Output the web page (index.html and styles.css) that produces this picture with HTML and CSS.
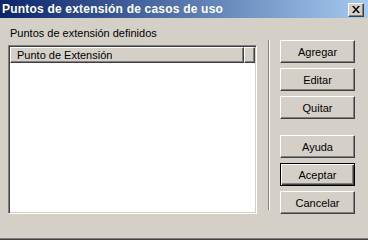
FILE: index.html
```html
<!DOCTYPE html>
<html lang="es">
<head>
    <meta charset="UTF-8">
    <title>Puntos de extensión de casos de uso</title>
    <link rel="stylesheet" href="styles.css">
</head>
<body>
    <div class="window">
        <div class="titlebar">
            <span class="title">Puntos de extensión de casos de uso</span>
            <button class="close-btn" type="button">
                <svg width="8" height="7" viewBox="0 0 8 7">
                    <path d="M0 0h2l2 2.5 2-2.5h2l-3 3.5 3 3.5h-2l-2-2.5-2 2.5h-2l3-3.5z" fill="#000"/>
                </svg>
            </button>
        </div>

        <div class="content">
            <div class="left-col">
                <div class="group-label">Puntos de extensión definidos</div>
                <div class="listview">
                    <div class="lv-header">
                        <div class="lv-col main">Punto de Extensión</div>
                        <div class="lv-col rest"></div>
                    </div>
                    <div class="lv-body"></div>
                </div>
            </div>

            <div class="separator"></div>

            <div class="buttons">
                <button type="button" class="btn">Agregar</button>
                <button type="button" class="btn">Editar</button>
                <button type="button" class="btn">Quitar</button>
                <button type="button" class="btn spaced">Ayuda</button>
                <button type="button" class="btn default">Aceptar</button>
                <button type="button" class="btn">Cancelar</button>
            </div>
        </div>
    </div>
</body>
</html>
```

FILE: styles.css
```css
body {
    margin: 0;
    font-family: "Liberation Sans", Arial, sans-serif;
    font-size: 11px;
    background: #d4d0c8;
}

.window {
    width: 368px;
    height: 240px;
    box-sizing: border-box;
    border-bottom: 1px solid #404040;
    box-shadow: inset 0 -1px #808080;
    overflow: hidden;
}

.titlebar {
    height: 18px;
    display: flex;
    align-items: center;
    justify-content: space-between;
    padding: 0 4px 0 2px;
    background: linear-gradient(to right, #0a246a, #a6caf0);
}

.title {
    color: #fff;
    font-weight: bold;
    font-size: 12px;
    letter-spacing: 0.2px;
}

.close-btn {
    width: 16px;
    height: 14px;
    padding: 0;
    margin-top: 1px;
    display: flex;
    align-items: center;
    justify-content: center;
    background: #d4d0c8;
    border: 1px solid;
    border-color: #fff #404040 #404040 #fff;
    box-shadow: inset -1px -1px #808080;
}

.content {
    display: flex;
    align-items: flex-start;
    padding: 9px 0 0 8px;
}

.left-col {
    width: 249px;
}

.group-label {
    line-height: 13px;
    padding-left: 2px;
    margin-bottom: 5px;
}

.listview {
    height: 169px;
    box-sizing: border-box;
    border: 1px solid;
    border-color: #808080 #fff #fff #808080;
    box-shadow: inset 1px 1px #404040, inset -1px -1px #d4d0c8;
    padding: 1px;
    display: flex;
    flex-direction: column;
}

.lv-header {
    display: flex;
    height: 16px;
}

.lv-col {
    box-sizing: border-box;
    height: 16px;
    line-height: 14px;
    background: #d4d0c8;
    border: 1px solid;
    border-color: #fff #404040 #404040 #fff;
    box-shadow: inset -1px -1px #808080;
    padding-left: 6px;
}

.lv-col.main {
    width: 234px;
}

.lv-col.rest {
    flex: 1;
}

.lv-body {
    flex: 1;
    background: #fff;
}

.separator {
    width: 1px;
    height: 170px;
    margin: 13px 0 0 11px;
    background: #808080;
    border-right: 1px solid #fff;
}

.buttons {
    display: flex;
    flex-direction: column;
    gap: 5px;
    margin: 13px 0 0 10px;
}

.btn {
    width: 75px;
    height: 23px;
    padding: 0;
    font-family: "Liberation Sans", Arial, sans-serif;
    font-size: 11px;
    color: #000;
    background: #d4d0c8;
    border: 1px solid;
    border-color: #fff #404040 #404040 #fff;
    box-shadow: inset -1px -1px #808080, inset 1px 1px #d4d0c8;
}

.btn.spaced {
    margin-top: 11px;
}

.btn.default {
    border: 1px solid #000;
    box-shadow: inset 1px 1px #fff, inset -1px -1px #404040, inset -2px -2px #808080;
}
```
